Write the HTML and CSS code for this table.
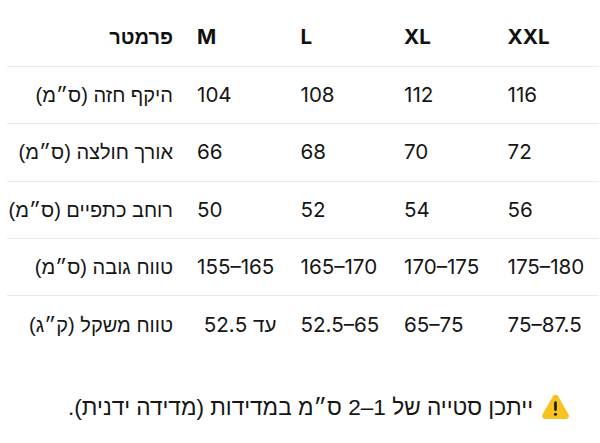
FILE: index.html
```html
<!DOCTYPE html>
<html lang="he">
<head>
<meta charset="utf-8">
<title>טבלת מידות</title>
<link rel="stylesheet" href="styles.css">
</head>
<body>
<div class="page">
  <table class="sizes">
    <thead>
      <tr>
        <th class="param" dir="rtl">פרמטר</th>
        <th>M</th>
        <th>L</th>
        <th>XL</th>
        <th>XXL</th>
      </tr>
    </thead>
    <tbody>
      <tr>
        <td class="param" dir="rtl">היקף חזה (ס״מ)</td>
        <td>104</td><td>108</td><td>112</td><td>116</td>
      </tr>
      <tr>
        <td class="param" dir="rtl">אורך חולצה (ס״מ)</td>
        <td>66</td><td>68</td><td>70</td><td>72</td>
      </tr>
      <tr>
        <td class="param" dir="rtl">רוחב כתפיים (ס״מ)</td>
        <td>50</td><td>52</td><td>54</td><td>56</td>
      </tr>
      <tr>
        <td class="param" dir="rtl">טווח גובה (ס״מ)</td>
        <td>155–165</td><td>165–170</td><td>170–175</td><td>175–180</td>
      </tr>
      <tr>
        <td class="param" dir="rtl">טווח משקל (ק״ג)</td>
        <td class="upto" dir="rtl">עד 52.5</td><td>52.5–65</td><td>65–75</td><td>75–87.5</td>
      </tr>
    </tbody>
  </table>
  <p class="note" dir="rtl"><svg class="warn" viewBox="0 0 30 26" width="29" height="25" aria-hidden="true"><path d="M12.4 2.2a3 3 0 0 1 5.2 0l11 19.2a3 3 0 0 1-2.6 4.5H4a3 3 0 0 1-2.6-4.5z" fill="#F7C31F"/><rect x="13.6" y="7.6" width="2.8" height="10" rx="1.4" fill="#1a1a1a"/><circle cx="15" cy="21" r="1.6" fill="#1a1a1a"/></svg>ייתכן סטייה של 1–2 ס״מ במדידות (מדידה ידנית).</p>
</div>
</body>
</html>
```

FILE: styles.css
```css
html, body {
  margin: 0;
  padding: 0;
  background: #ffffff;
}

body {
  font-family: Inter, "Liberation Sans", sans-serif;
  color: #161616;
  font-size: 20px;
}

.page {
  padding: 8px 0 0 7px;
}

.sizes {
  border-collapse: collapse;
  table-layout: fixed;
  width: 592px;
}

.sizes th,
.sizes td {
  height: 57.3px;
  padding: 0 12px;
  text-align: left;
  vertical-align: middle;
  white-space: nowrap;
  font-size: 20.6px;
  line-height: 24px;
}

.sizes th {
  height: 58.5px;
  font-weight: 700;
  color: #111111;
}

.sizes td {
  font-weight: 400;
}

.sizes th.param,
.sizes td.param {
  width: 178px;
  padding: 0 12px 0 0;
  text-align: right;
  box-sizing: border-box;
  font-size: 20px;
  font-family: "Liberation Sans", sans-serif;
}

.sizes th:not(.param),
.sizes td:not(.param) {
  width: 103.5px;
  box-sizing: border-box;
}

.sizes thead tr,
.sizes tbody tr {
  border-bottom: 1px solid #e9e9e9;
}

.sizes tbody tr:last-child {
  border-bottom: none;
}

.sizes td.upto {
  text-align: left;
  padding-left: 20px;
}

.note {
  margin: 41px 0 0 0;
  padding-right: 30px;
  text-align: right;
  font-family: "Liberation Sans", sans-serif;
  font-size: 22.6px;
  line-height: 28px;
  color: #161616;
}

.warn {
  display: inline-block;
  vertical-align: -4px;
  margin-left: 8px;
}
```
